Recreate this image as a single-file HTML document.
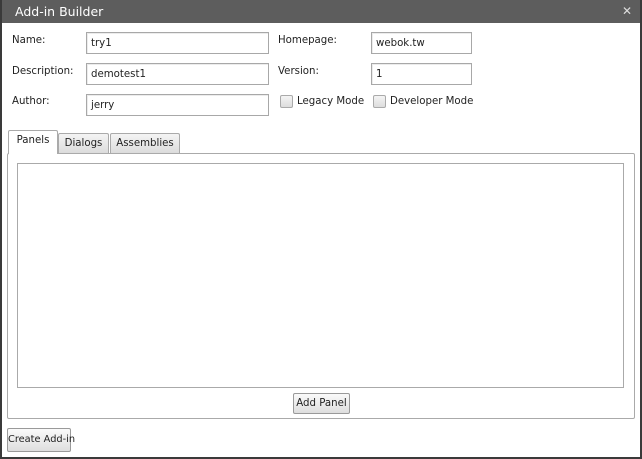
<!DOCTYPE html>
<html><head><style>
*{box-sizing:border-box;margin:0;padding:0}
body{width:642px;height:459px;overflow:hidden;background:#fff;font-family:"DejaVu Sans","Liberation Sans",sans-serif;font-size:10.2px;color:#222;position:relative;white-space:nowrap}
.frame{position:absolute;left:0;top:0;width:642px;height:459px;border:2px solid #3a3a3a;border-top:none}
.title{position:absolute;left:0;top:0;width:642px;height:23px;background:#5d5d5d;color:#fff;font-size:12.5px;padding:4px 0 0 15px}
.x{position:absolute;right:10px;top:4px;color:#ddd;font-size:12px}
.a{position:absolute}
.in{position:absolute;border:1px solid #a8a8a8;background:#fff;padding:5px 0 0 4px;height:22px;box-shadow:inset 1px 1px 0 #ececec}
.cb{position:absolute;width:13px;height:13px;border:1px solid #aaa;border-radius:2px;background:linear-gradient(#f4f4f4,#ddd)}
.tab{position:absolute;border:1px solid #aaa;border-bottom:none;background:linear-gradient(#f4f4f4,#dcdcdc);padding:4px 0 0 0;text-align:center;border-radius:2px 2px 0 0}
.btn{position:absolute;border:1px solid #9a9a9a;border-radius:2px;background:linear-gradient(#fafafa,#dedede);text-align:center;padding-top:4px}
</style></head><body>
<div class="title">Add-in Builder<span class="x">✕</span></div>
<div class="frame"></div>
<div class="a" style="left:12px;top:35px">Name:</div>
<div class="a" style="left:12px;top:66px">Description:</div>
<div class="a" style="left:12px;top:96px">Author:</div>
<div class="in" style="left:86px;top:32px;width:183px">try1</div>
<div class="in" style="left:86px;top:63px;width:183px">demotest1</div>
<div class="in" style="left:86px;top:94px;width:183px">jerry</div>
<div class="a" style="left:278px;top:35px">Homepage:</div>
<div class="a" style="left:278px;top:66px">Version:</div>
<div class="in" style="left:371px;top:32px;width:101px">webok.tw</div>
<div class="in" style="left:371px;top:63px;width:101px">1</div>
<div class="cb" style="left:280px;top:95px"></div>
<div class="a" style="left:297px;top:96px">Legacy Mode</div>
<div class="cb" style="left:373px;top:95px"></div>
<div class="a" style="left:390px;top:96px">Developer Mode</div>
<div class="a" style="left:7px;top:153px;width:628px;height:266px;border:1px solid #aaa;border-radius:2px"></div>
<div class="tab" style="left:8px;top:130px;width:50px;height:24px;background:#fff">Panels</div>
<div class="tab" style="left:58px;top:133px;width:51px;height:20px">Dialogs</div>
<div class="tab" style="left:110px;top:133px;width:70px;height:20px">Assemblies</div>
<div class="a" style="left:17px;top:163px;width:607px;height:225px;border:1px solid #aaa"></div>
<div class="btn" style="left:293px;top:393px;width:57px;height:21px">Add Panel</div>
<div class="btn" style="left:7px;top:428px;width:64px;height:24px;padding-top:5px;font-size:9.8px">Create Add-in</div>
</body></html>
